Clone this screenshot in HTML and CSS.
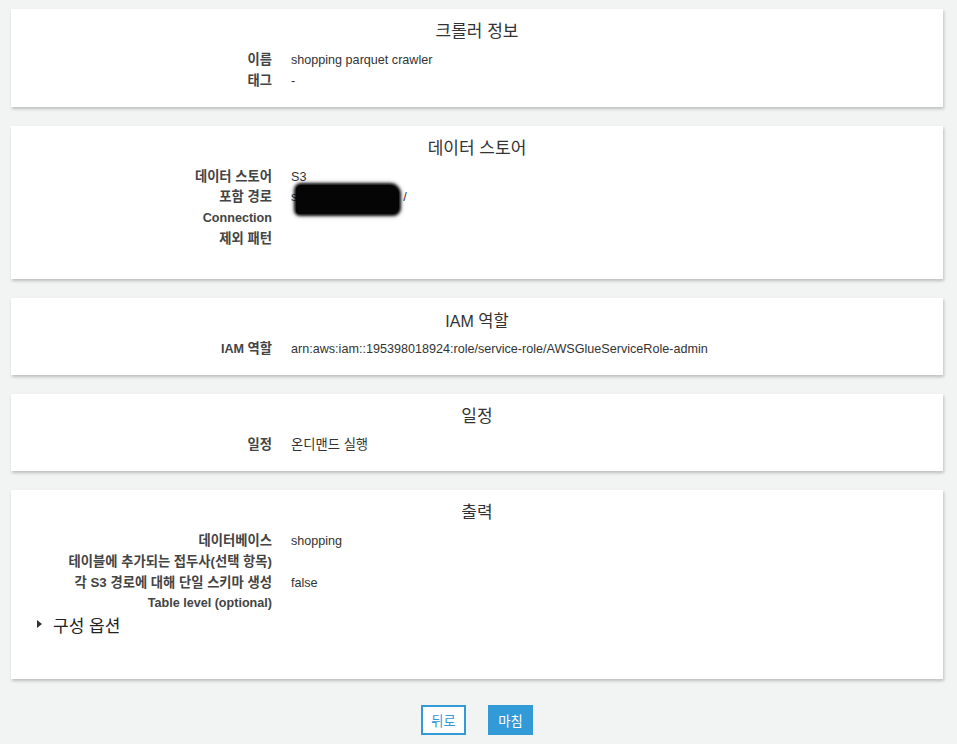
FILE: index.html
```html
<!DOCTYPE html>
<html lang="ko">
<head>
<meta charset="utf-8">
<link rel="stylesheet" href="styles.css">
</head>
<body>
<div class="page">
  <section class="card c1">
    <h2 class="title ko">크롤러 정보</h2>
    <div class="rows">
      <div class="label ko">이름</div><div class="value">shopping parquet crawler</div>
      <div class="label ko">태그</div><div class="value">-</div>
    </div>
  </section>

  <section class="card c2">
    <h2 class="title ko">데이터 스토어</h2>
    <div class="rows">
      <div class="label ko">데이터 스토어</div><div class="value">S3</div>
      <div class="label ko">포함 경로</div><div class="value">s<span class="redact"></span>/</div>
      <div class="label">Connection</div><div class="value"></div>
      <div class="label ko">제외 패턴</div><div class="value"></div>
    </div>
  </section>

  <section class="card c3">
    <h2 class="title">IAM <span class="ko">역할</span></h2>
    <div class="rows">
      <div class="label">IAM <span class="ko">역할</span></div><div class="value">arn:aws:iam::195398018924:role/service-role/AWSGlueServiceRole-admin</div>
    </div>
  </section>

  <section class="card c4">
    <h2 class="title ko">일정</h2>
    <div class="rows">
      <div class="label ko">일정</div><div class="value ko">온디맨드 실행</div>
    </div>
  </section>

  <section class="card c5">
    <h2 class="title ko">출력</h2>
    <div class="rows">
      <div class="label ko">데이터베이스</div><div class="value">shopping</div>
      <div class="label ko">테이블에 추가되는 접두사(선택 항목)</div><div class="value"></div>
      <div class="label ko">각 S3 경로에 대해 단일 스키마 생성</div><div class="value">false</div>
      <div class="label">Table level (optional)</div><div class="value"></div>
    </div>
    <div class="expander"><span class="tri"></span><span class="exp-text">구성 옵션</span></div>
  </section>

  <div class="actions">
    <button class="btn btn-outline ko">뒤로</button>
    <button class="btn btn-primary ko">마침</button>
  </div>
</div>
</body>
</html>
```

FILE: styles.css
```css
html, body {
  margin: 0;
  padding: 0;
  background: #f2f3f3;
}
body {
  font-family: "Liberation Sans", Arial, "Noto Sans CJK KR", sans-serif;
  font-size: 12.6px;
  color: #333;
}
.page {
  padding: 9px 14px 0 11px;
  display: flex;
  flex-direction: column;
  gap: 19px;
}
.card {
  background: #fff;
  box-shadow: 1px 2px 3px rgba(0, 0, 0, 0.22);
  padding: 13px 0 16px;
}
.title {
  margin: 0 0 8px;
  height: 20px;
  font-size: 16px;
  font-weight: normal;
  text-align: center;
  line-height: 20px;
  color: #333;
}
.title.ko {
  font-size: 17px;
}
.ko {
  font-size: 13.3px;
}
.title .ko {
  font-size: 16.5px;
}
.rows {
  display: grid;
  grid-template-columns: 261px 1fr;
  grid-auto-rows: 20.75px;
  column-gap: 19px;
  line-height: 20.75px;
}
.label {
  text-align: right;
  font-weight: bold;
  color: #444;
  white-space: nowrap;
}
.value {
  color: #333;
  white-space: nowrap;
}
.redact {
  display: inline-block;
  position: relative;
  width: 106px;
  height: 1px;
  vertical-align: middle;
}
.redact::before {
  content: "";
  position: absolute;
  left: -1px;
  top: -12px;
  width: 103px;
  height: 29px;
  background: #050505;
  border-radius: 5px 9px 6px 4px;
  box-shadow: 0 0 3px 2px rgba(0, 0, 0, 0.9), 0 0 6px 1px rgba(0, 0, 0, 0.3);
}
.c1 { padding-bottom: 15px; }
.c2 { padding-bottom: 29px; }
.c4 { padding-bottom: 15px; }
.c5 { padding-bottom: 44px; }
.expander {
  display: flex;
  align-items: center;
  padding-left: 26px;
  margin-top: -1px;
  height: 22px;
}
.tri {
  width: 0;
  height: 0;
  border-top: 4px solid transparent;
  border-bottom: 4px solid transparent;
  border-left: 5px solid #333;
  margin-right: 11px;
}
.exp-text {
  font-size: 17px;
  color: #222;
}
.actions {
  display: flex;
  justify-content: center;
  gap: 22px;
  padding: 7px 0 0 0;
}
.btn {
  font-family: "Liberation Sans", Arial, "Noto Sans CJK KR", sans-serif;
  height: 30px;
  width: 45px;
  padding: 0;
  cursor: pointer;
}
.btn-outline {
  background: #fff;
  border: 2px solid #339ad8;
  color: #339ad8;
}
.btn-primary {
  background: #339ad8;
  border: 2px solid #339ad8;
  color: #fff;
}
```
